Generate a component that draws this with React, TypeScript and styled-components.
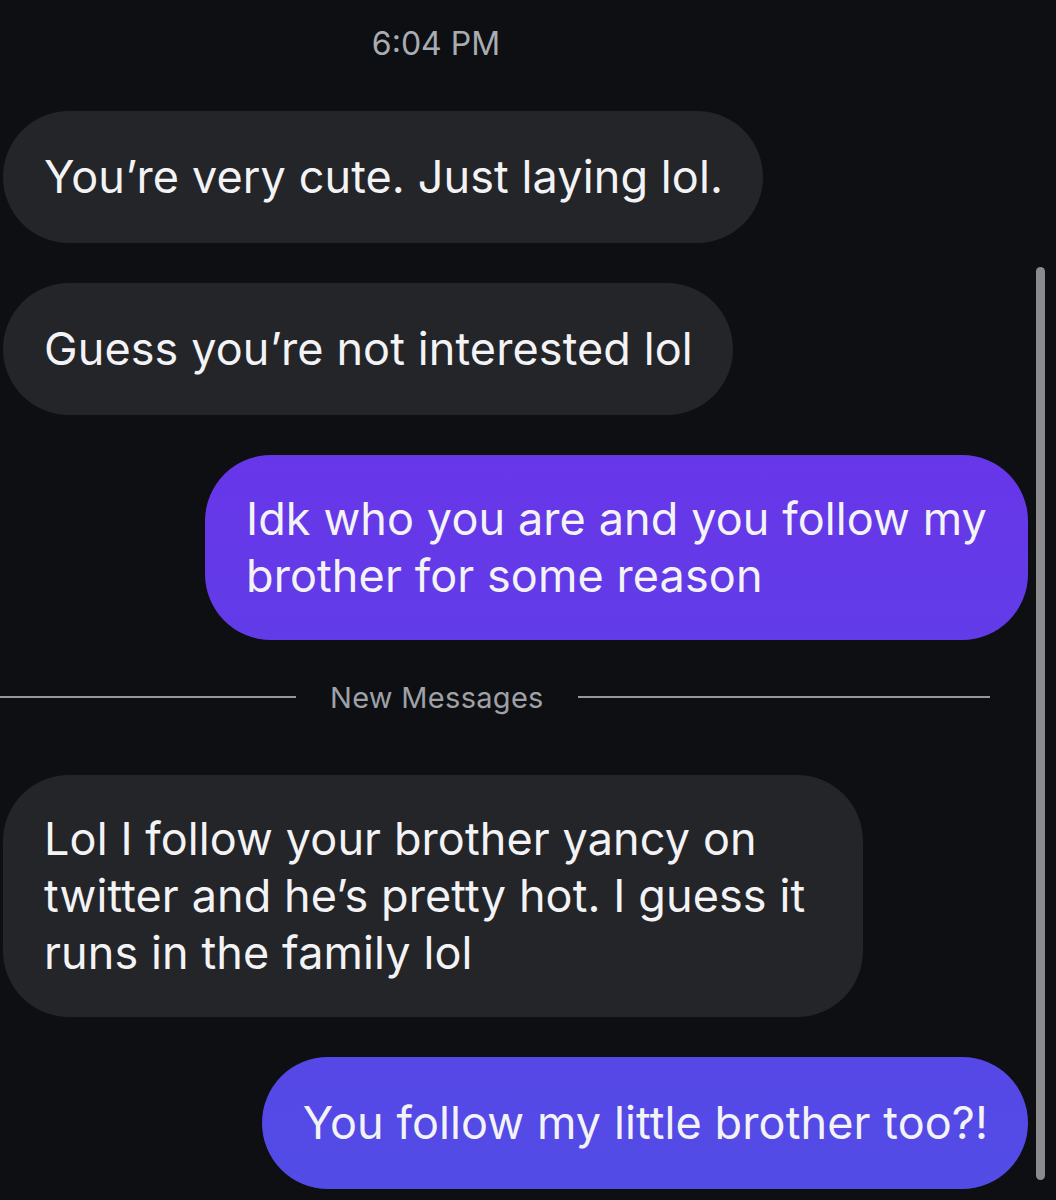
import React from 'react';
import styled, { createGlobalStyle } from 'styled-components';

const GlobalStyle = createGlobalStyle`
    html, body {
        margin: 0;
        padding: 0;
        background: #0d0f12;
    }
    body {
        font-family: Inter, "Noto Sans", "Liberation Sans", sans-serif;
        -webkit-font-smoothing: antialiased;
    }
`;

const Thread = styled.div`
    position: relative;
    width: 1056px;
    height: 1200px;
    overflow: hidden;
    background: #0d0f12;
    padding-top: 24px;
    box-sizing: border-box;
    display: flex;
    flex-direction: column;
    gap: 40px;
`;

const Timestamp = styled.div`
    font-size: 32px;
    line-height: 40px;
    color: #a9acb2;
    text-align: center;
    padding-right: 184px;
    margin-bottom: 7px;
`;

const Row = styled.div<{ $mine?: boolean }>`
    display: flex;
    justify-content: ${(p) => (p.$mine ? 'flex-end' : 'flex-start')};
    padding: 0 28px 0 3px;
`;

const Bubble = styled.div<{ $mine?: boolean; $width?: number }>`
    box-sizing: border-box;
    display: flex;
    flex-direction: column;
    justify-content: center;
    width: ${(p) => (p.$width ? `${p.$width}px` : 'auto')};
    min-height: 132px;
    padding: 35px 40px 36px 41px;
    border-radius: 66px;
    font-size: 45px;
    line-height: 57px;
    letter-spacing: 0.1px;
    color: #f3f3f5;
    white-space: nowrap;
    background: ${(p) =>
        p.$mine ? 'linear-gradient(180deg, #7429ea 0px, #524ce6 1200px) fixed' : '#232529'};
`;

const Line = styled.span`
    display: block;
`;

const Divider = styled.div`
    display: flex;
    align-items: center;
    height: 34px;
    margin-right: 66px;
    margin-bottom: 21px;
`;

const Rule = styled.div<{ $grow?: boolean }>`
    height: 2px;
    background: #96979b;
    width: ${(p) => (p.$grow ? 'auto' : '296px')};
    flex: ${(p) => (p.$grow ? 1 : 'none')};
`;

const DividerLabel = styled.span`
    margin: 0 34px;
    font-size: 29px;
    letter-spacing: 0.3px;
    color: #9ea1a7;
`;

const ScrollThumb = styled.div`
    position: absolute;
    left: 1036px;
    top: 267px;
    width: 9px;
    height: 913px;
    border-radius: 5px;
    background: #8b8b8d;
`;

type Message = {
    mine?: boolean;
    lines: string[];
    width?: number;
};

const before: Message[] = [
    { lines: ['You\u2019re very cute. Just laying lol.'] },
    { lines: ['Guess you\u2019re not interested lol'] },
    { mine: true, lines: ['Idk who you are and you follow my', 'brother for some reason'], width: 823 },
];

const after: Message[] = [
    {
        lines: ['Lol I follow your brother yancy on', 'twitter and he\u2019s pretty hot. I guess it', 'runs in the family lol'],
        width: 860,
    },
    { mine: true, lines: ['You follow my little brother too?!'] },
];

function MessageRow({ msg }: { msg: Message }) {
    return (
        <Row $mine={msg.mine}>
            <Bubble $mine={msg.mine} $width={msg.width}>
                {msg.lines.map((l) => (
                    <Line key={l}>{l}</Line>
                ))}
            </Bubble>
        </Row>
    );
}

export default function App() {
    return (
        <>
            <GlobalStyle />
            <Thread>
                <Timestamp>6:04 PM</Timestamp>
                {before.map((m) => (
                    <MessageRow key={m.lines[0]} msg={m} />
                ))}
                <Divider>
                    <Rule />
                    <DividerLabel>New Messages</DividerLabel>
                    <Rule $grow />
                </Divider>
                {after.map((m) => (
                    <MessageRow key={m.lines[0]} msg={m} />
                ))}
                <ScrollThumb />
            </Thread>
        </>
    );
}
